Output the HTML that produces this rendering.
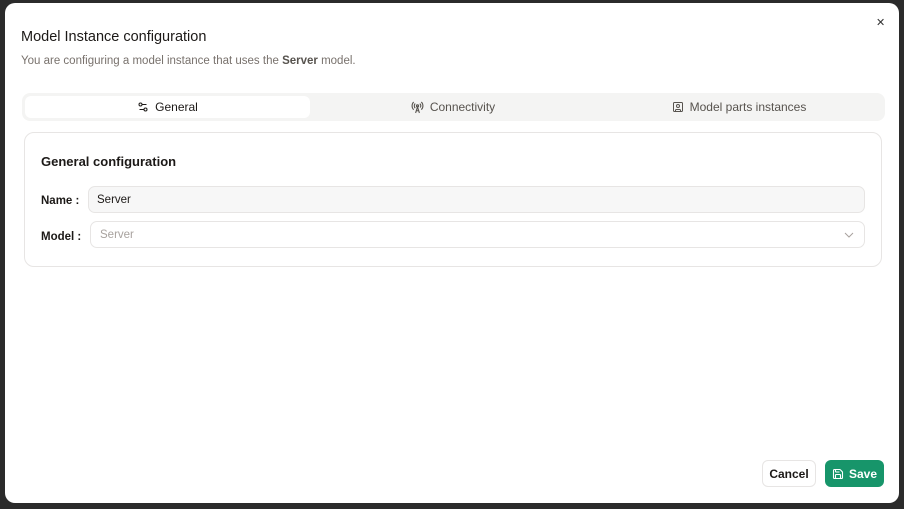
<!DOCTYPE html>
<html><head><meta charset="utf-8"><style>
*{box-sizing:border-box;margin:0;padding:0}
body{width:904px;height:509px;background:#2b2b2b;font-family:"Liberation Sans",sans-serif;position:relative;overflow:hidden}
.dlg{position:absolute;left:5px;top:3px;width:894px;height:500px;background:#fff;border-radius:10px}
.a{position:absolute}
h1{position:absolute;left:16px;top:26px;font-size:14.5px;font-weight:500;color:#1c1917}
.sub{left:16px;top:52px;font-size:11.5px;color:#78716c}
.sub b{color:#57534e}
.tabs{left:17px;top:90px;width:863px;height:28px;background:#f4f4f3;border-radius:8px}
.tab{position:absolute;top:3px;height:22px;font-size:12px;color:#57534e;display:flex;align-items:center;justify-content:center;gap:6px}
.tab.on{background:#fff;border-radius:6px;color:#1c1917;font-weight:500}
.card{left:19px;top:129px;width:858px;height:135px;border:1px solid #e7e5e4;border-radius:10px}
.card h2{position:absolute;left:16px;top:21px;font-size:13px;font-weight:600;color:#1c1917}
.lbl{position:absolute;font-size:11.5px;font-weight:600;color:#1c1917}
.inp{position:absolute;height:27px;border:1px solid #e7e5e4;border-radius:7px;font-size:11.5px;padding-left:8px;display:flex;align-items:center}
.btn{position:absolute;height:27px;border-radius:6px;font-size:12px;font-weight:600;display:flex;align-items:center;justify-content:center;gap:5px}
</style></head><body>
<div class="dlg">
<div class="a" style="left:871px;top:13px;font-size:11px;color:#333">✕</div>
<h1>Model Instance configuration</h1>
<div class="a sub">You are configuring a model instance that uses the <b>Server</b> model.</div>
<div class="a tabs">
 <div class="tab on" style="left:3px;width:285px">
  <svg width="12" height="12" viewBox="0 0 24 24" fill="none" stroke="#1c1917" stroke-width="2"><path d="M14 17H5M19 7h-9"/><circle cx="17" cy="17" r="3"/><circle cx="7" cy="7" r="3"/></svg>General</div>
 <div class="tab" style="left:288px;width:286px">
  <svg width="13" height="13" viewBox="0 0 24 24" fill="none" stroke="#57534e" stroke-width="2"><path d="M4.9 16.1C1 12.2 1 5.8 4.9 1.9M7.8 4.7a6.14 6.14 0 0 0 0 8.5M16.2 4.8c2 2 2.3 5.1.8 7.4M19.1 1.9a9.96 9.96 0 0 1 0 14.1"/><circle cx="12" cy="9" r="2"/><path d="M8.5 22 12 11l3.5 11M9.5 18h5"/></svg>Connectivity</div>
 <div class="tab" style="left:574px;width:286px">
  <svg width="12" height="12" viewBox="0 0 24 24" fill="none" stroke="#57534e" stroke-width="2"><rect x="3" y="3" width="18" height="18" rx="2"/><circle cx="12" cy="10" r="3"/><path d="M7 21v-2a2 2 0 0 1 2-2h6a2 2 0 0 1 2 2v2"/></svg>Model parts instances</div>
</div>
<div class="a card">
 <h2>General configuration</h2>
 <div class="lbl" style="left:16px;top:62px">Name :</div>
 <div class="inp" style="left:63px;top:53px;width:777px;background:#f7f7f7;color:#1c1917">Server</div>
 <div class="lbl" style="left:16px;top:98px">Model :</div>
 <div class="inp" style="left:65px;top:88px;width:775px;color:#a8a29e;padding-left:9px">Server
  <svg style="position:absolute;right:10px;top:9px" width="10" height="8" viewBox="0 0 10 8" fill="none" stroke="#a8a29e" stroke-width="1"><path d="M1 2l4 4 4-4"/></svg></div>
</div>
<div class="btn" style="left:757px;top:457px;width:54px;border:1px solid #e7e5e4;color:#1c1917">Cancel</div>
<div class="btn" style="left:820px;top:457px;width:59px;background:#17956a;color:#fff">
 <svg width="12" height="12" viewBox="0 0 24 24" fill="none" stroke="#fff" stroke-width="2.2"><path d="M15.2 3a2 2 0 0 1 1.4.6l3.8 3.8a2 2 0 0 1 .6 1.4V19a2 2 0 0 1-2 2H5a2 2 0 0 1-2-2V5a2 2 0 0 1 2-2z"/><path d="M17 21v-7a1 1 0 0 0-1-1H8a1 1 0 0 0-1 1v7M7 3v4a1 1 0 0 0 1 1h7"/></svg>Save</div>
</div>
</body></html>
